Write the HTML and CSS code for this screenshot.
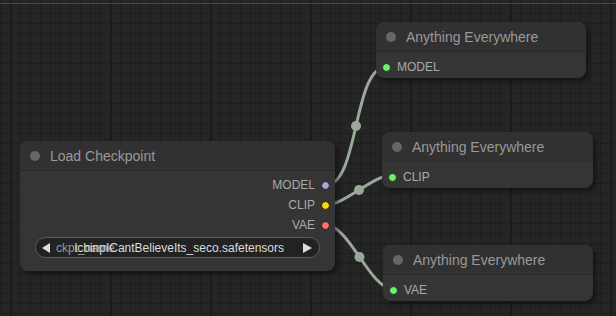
FILE: index.html
```html
<!DOCTYPE html>
<html lang="en">
<head>
  <meta charset="UTF-8">
  <title>Graph</title>
  <link rel="stylesheet" href="styles.css">
</head>
<body>
  <div class="canvas">
    <!-- links are drawn under the nodes -->
    <svg class="links" width="616" height="316" viewBox="0 0 616 316">
      <g fill="none" stroke="#99a899" stroke-width="3" stroke-linecap="round">
        <path d="M326 185 C359 185 353 67 386 67"/>
        <path d="M326 205 C344 205 374 175 392 175"/>
        <path d="M326 225 C349 225 370 289 393 289"/>
      </g>
      <g fill="#99a899">
        <circle cx="356" cy="126" r="5"/>
        <circle cx="359" cy="190" r="5"/>
        <circle cx="359.5" cy="257" r="5"/>
      </g>
    </svg>

    <div class="node node-ckpt">
      <div class="node-title"><span class="title-dot"></span>Load Checkpoint</div>
      <div class="node-body">
        <div class="slot slot-out">MODEL <span class="dot model"></span></div>
        <div class="slot slot-out">CLIP <span class="dot clip"></span></div>
        <div class="slot slot-out">VAE <span class="dot vae"></span></div>
        <div class="combo">
          <svg class="arrow" width="8" height="10" viewBox="0 0 8 10"><polygon points="8,0 8,10 0,5"/></svg>
          <div class="combo-text">
            <span class="combo-label">ckpt_name</span>
            <span class="combo-value">icbinpICantBelieveIts_seco.safetensors</span>
          </div>
          <svg class="arrow" width="9" height="10" viewBox="0 0 9 10"><polygon points="0,0 0,10 9,5"/></svg>
        </div>
      </div>
    </div>

    <div class="node node-ae1">
      <div class="node-title"><span class="title-dot"></span>Anything Everywhere</div>
      <div class="node-body">
        <div class="slot slot-in"><span class="dot any"></span>MODEL</div>
      </div>
    </div>

    <div class="node node-ae2">
      <div class="node-title"><span class="title-dot"></span>Anything Everywhere</div>
      <div class="node-body">
        <div class="slot slot-in"><span class="dot any"></span>CLIP</div>
      </div>
    </div>

    <div class="node node-ae3">
      <div class="node-title"><span class="title-dot"></span>Anything Everywhere</div>
      <div class="node-body">
        <div class="slot slot-in"><span class="dot any"></span>VAE</div>
      </div>
    </div>
  </div>
</body>
</html>
```

FILE: styles.css
```css
body { margin: 0; background: #222; font-family: "Liberation Sans", Arial, sans-serif; }

.canvas {
  position: relative;
  width: 616px;
  height: 316px;
  overflow: hidden;
  background-color: #252525;
  background-image:
    linear-gradient(to bottom, transparent 3px, #2e4b68 3px, #2e4b68 4px, transparent 4px),
    linear-gradient(to right, #1b1b1b 2px, transparent 2px),
    linear-gradient(to right, #1e1e1e 1px, transparent 1px),
    linear-gradient(to bottom, #1e1e1e 1px, transparent 1px);
  background-size: 100% 100%, 100px 100%, 10px 10px, 10px 10px;
  background-position: 0 0, 10px 0, 0 0, 0 3px;
  background-repeat: no-repeat, repeat, repeat, repeat;
}

.links { position: absolute; left: 0; top: 0; }

.node {
  position: absolute;
  background: #353535;
  border-radius: 8px;
  box-shadow: 3px 3px 5px rgba(0, 0, 0, 0.45);
}
.node-title {
  box-sizing: border-box;
  height: 30px;
  display: flex;
  align-items: center;
  gap: 10px;
  padding-left: 10px;
  background: #313131;
  border-bottom: 1px solid #2a2a2a;
  border-radius: 8px 8px 0 0;
  color: #999;
  font-size: 14px;
}
.title-dot { width: 10px; height: 10px; border-radius: 50%; background: #666; }

.node-body { padding: 5px 0 1px; }

.slot {
  height: 20px;
  display: flex;
  align-items: center;
  gap: 6px;
  color: #aaa;
  font-size: 12px;
}
.slot-out { justify-content: flex-end; padding-right: 5px; }
.slot-in { padding-left: 6px; }

.dot {
  box-sizing: border-box;
  width: 9px;
  height: 9px;
  border-radius: 50%;
  border: 1px solid #1c1c1c;
}
.dot.model { background: #b39ddb; }
.dot.clip { background: #ffd500; }
.dot.vae { background: #ff6e6e; }
.dot.any { background: #6ef26e; border-color: #2a2a2a; }

.combo {
  box-sizing: border-box;
  height: 21px;
  margin: 2px 15px 12px;
  display: flex;
  align-items: center;
  padding: 0 7px 0 6px;
  background: #222;
  border: 1px solid #5c5c5c;
  border-radius: 11px;
  font-size: 12px;
}
.arrow { fill: #ddd; flex: none; }
.combo-text {
  flex: 1;
  display: grid;
  padding: 0 19px 0 6px;
}
.combo-label, .combo-value { grid-area: 1 / 1; white-space: nowrap; }
.combo-label { color: #999; justify-self: start; }
.combo-value { color: #ddd; justify-self: end; }

.node-ckpt { left: 20px; top: 141px; width: 315px; }
.node-ckpt .node-body { padding-top: 4px; }
.node-ae1 { left: 376px; top: 22px; width: 210px; }
.node-ae2 { left: 382px; top: 132px; width: 211px; }
.node-ae3 { left: 383px; top: 245px; width: 210px; }
```
